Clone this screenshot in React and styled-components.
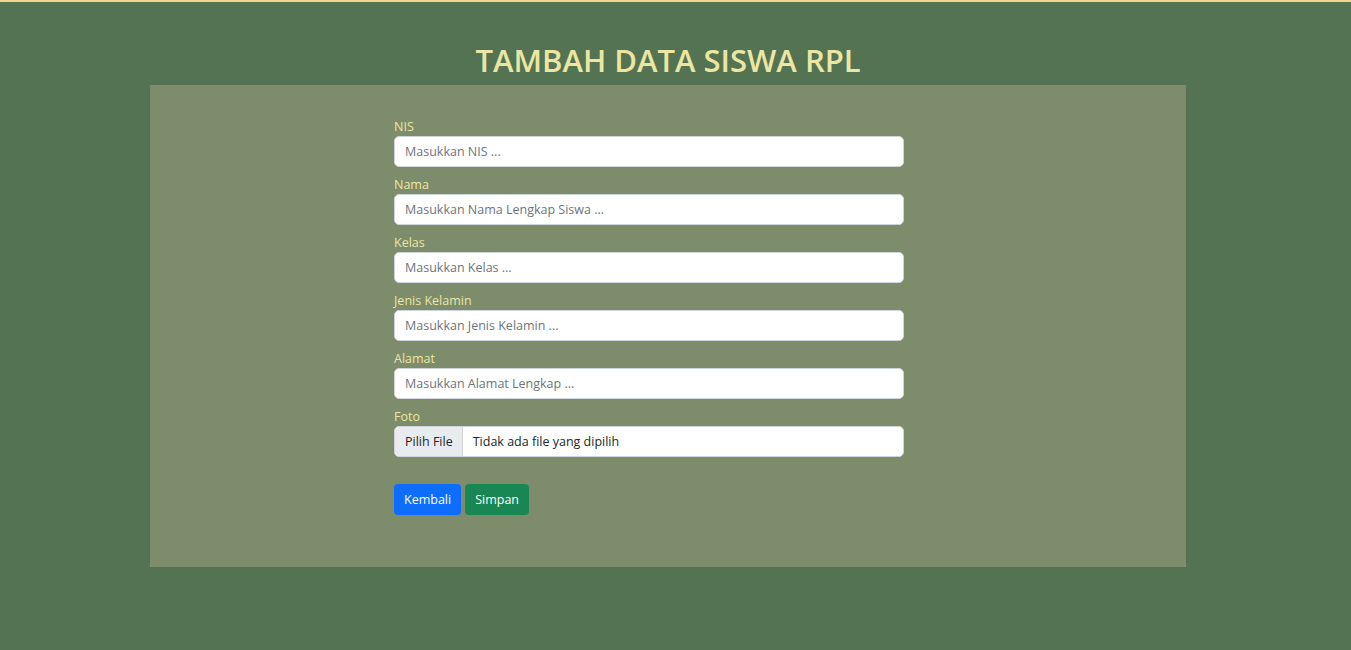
import React from "react";
import styled, { createGlobalStyle } from "styled-components";

const Global = createGlobalStyle`
  html, body { margin: 0; padding: 0; }
  body {
    background: #537353;
    border-top: 2px solid #f2d48e;
    font-family: "Open Sans", "Noto Sans", sans-serif;
    min-height: 648px;
  }
  * { box-sizing: border-box; }
`;

const Page = styled.div`
  display: flex;
  flex-direction: column;
  align-items: center;
  padding-top: 36px;
  padding-right: 15px;
`;

const Title = styled.h1`
  margin: 0;
  height: 47px;
  font-size: 31px;
  line-height: 45px;
  font-weight: 600;
  color: #ece6a3;
  text-align: center;
`;

const Panel = styled.div`
  width: 1036px;
  background: #7d8c6a;
  padding: 31px 0 52px 244px;
  display: flex;
`;

const Form = styled.form`
  width: 510px;
  display: flex;
  flex-direction: column;
`;

const Field = styled.div`
  display: flex;
  flex-direction: column;
  margin-bottom: 7px;
`;

const Label = styled.label`
  font-size: 12.5px;
  line-height: 22px;
  height: 20px;
  color: #ece6a3;
`;

const Input = styled.input`
  height: 31px;
  width: 100%;
  border: 1px solid #ced4da;
  border-radius: 5px;
  background: #fff;
  padding: 0 10px;
  font-family: inherit;
  font-size: 12.5px;
  color: #212529;
  &::placeholder { color: #6c757d; }
`;

const FileBox = styled.div`
  height: 31px;
  display: flex;
  border: 1px solid #ced4da;
  border-radius: 5px;
  background: #fff;
  overflow: hidden;
  font-size: 12.5px;
  color: #212529;
`;

const FileButton = styled.span`
  display: flex;
  align-items: center;
  padding: 0 9px 0 10px;
  background: #e9ecef;
  border-right: 1px solid #ced4da;
`;

const FileName = styled.span`
  display: flex;
  align-items: center;
  padding-left: 10px;
`;

const Actions = styled.div`
  display: flex;
  gap: 4px;
  margin-top: 20px;
`;

const Button = styled.button`
  height: 31px;
  padding: 0 10px;
  border: none;
  border-radius: 4px;
  font-family: inherit;
  font-size: 12.5px;
  color: #fff;
  background: ${(p) => (p.$variant === "success" ? "#198754" : "#0d6efd")};
`;

const fields = [
  ["NIS", "Masukkan NIS ..."],
  ["Nama", "Masukkan Nama Lengkap Siswa ..."],
  ["Kelas", "Masukkan Kelas ..."],
  ["Jenis Kelamin", "Masukkan Jenis Kelamin ..."],
  ["Alamat", "Masukkan Alamat Lengkap ..."],
];

export default function App() {
  return (
    <>
      <Global />
      <Page>
        <Title>TAMBAH DATA SISWA RPL</Title>
        <Panel>
          <Form onSubmit={(e) => e.preventDefault()}>
            {fields.map(([label, ph]) => (
              <Field key={label}>
                <Label>{label}</Label>
                <Input placeholder={ph} />
              </Field>
            ))}
            <Field>
              <Label>Foto</Label>
              <FileBox>
                <FileButton>Pilih File</FileButton>
                <FileName>Tidak ada file yang dipilih</FileName>
              </FileBox>
            </Field>
            <Actions>
              <Button type="button">Kembali</Button>
              <Button type="submit" $variant="success">Simpan</Button>
            </Actions>
          </Form>
        </Panel>
      </Page>
    </>
  );
}
